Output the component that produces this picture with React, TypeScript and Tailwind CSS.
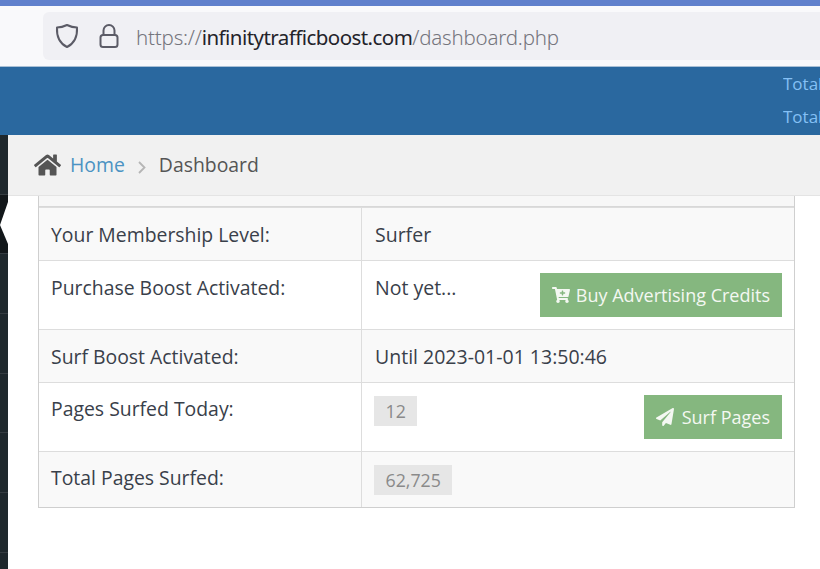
import React from "react";
import { FaHome, FaCartPlus, FaPaperPlane } from "react-icons/fa";

function Row({ label, value, badge, button, h, striped, icon, top }: { label: string; value?: string; badge?: string; button?: string; h: string; striped?: boolean; icon?: React.ReactNode; top?: boolean }) {
  return (
    <div className={`flex border-t border-[#dddddd] ${h} ${striped ? "bg-[#f9f9f9]" : "bg-white"}`}>
      <div className={`w-[323px] shrink-0 border-r border-[#dddddd] pl-3 leading-[26px] ${top ? "pt-[14px]" : "pt-[13px]"}`}>{label}</div>
      <div className={`flex flex-1 items-start justify-between pl-[13px] pr-3 leading-[26px] ${top ? "pt-[14px]" : "pt-[13px]"}`}>
        {value && <span className="text-[19.5px]">{value}</span>}
        {badge && <span className="-ml-px bg-[#e6e6e6] px-[11.5px] text-[17.8px] leading-[30px] text-[#8a8a8a]">{badge}</span>}
        {button && (
          <span className={`flex h-[44px] items-center bg-[#85b77f] px-3 text-[18px] text-[#f4f8f2] ${top ? "-mt-[2px]" : "-mt-px"}`}>
            {icon}
            {button}
          </span>
        )}
      </div>
    </div>
  );
}

const sideRows = ["h-[60px]", "h-[59px]", "h-[60px]", "h-[60px]", "h-[59px]", "h-[60px]", "h-[60px]"];

export default function App() {
  return (
    <div className="flex h-[569px] w-[820px] flex-col overflow-hidden bg-white font-['Open_Sans',sans-serif] text-[19.4px] text-[#39404a]">
      <div className="h-[6px] bg-[#6080cc]" />
      <div className="flex h-[60px] items-center bg-[#f9f9fb] pl-[43px]">
        <div className="flex h-[48px] flex-1 items-center rounded-l-[6px] bg-[#f0f0f4] pl-[12px]">
          <svg width="24" height="26" viewBox="0 0 24 26" fill="none" stroke="#5b5b66" strokeWidth="2" strokeLinejoin="round">
            <path d="M12 2 C15 3.5 18.5 4.5 22 4.5 C22.5 13 19 20.5 12 24 C5 20.5 1.5 13 2 4.5 C5.5 4.5 9 3.5 12 2 Z" />
          </svg>
          <svg className="ml-[20px]" width="20" height="26" viewBox="0 0 20 26" fill="none" stroke="#5b5b66" strokeWidth="2">
            <rect x="1.5" y="12" width="17" height="12" rx="2.5" />
            <path d="M4.5 12 V7.5 a5.5 5.5 0 0 1 11 0 V12" />
          </svg>
          <div className="ml-[17px] pt-[3px] font-['Noto_Sans',sans-serif] text-[20.5px] font-light tracking-[-0.2px] text-[#75757d]">
            https://<span className="font-normal tracking-[-0.55px] text-[#24232a]">infinitytrafficboost.com</span><span className="tracking-[-0.2px]">/dashboard.php</span>
          </div>
        </div>
      </div>
      <div className="flex h-[69px] flex-col items-end justify-center gap-[11px] overflow-hidden border-t border-[#a9c0d6] bg-[#2a689f] pb-[2px] text-[17px] leading-[22px] text-[#84c0f5]">
        <div className="w-[37px] overflow-hidden">Total</div>
        <div className="w-[37px] overflow-hidden">Total</div>
      </div>
      <div className="flex flex-1">
        <div className="flex w-[8px] shrink-0 flex-col bg-[#1f282d]">
          {sideRows.map((h, i) => (
            <div key={i} className={`${h} relative border-b border-[#363d42] ${i === 1 ? "bg-[#12171a]" : ""}`}>
              {i === 1 && (
                <svg className="absolute left-0 top-[6px]" width="8" height="44" viewBox="0 0 8 44">
                  <path d="M8 1 L0 24 L8 43 Z" fill="#ffffff" />
                </svg>
              )}
            </div>
          ))}
        </div>
        <div className="flex min-w-0 flex-1 flex-col">
          <div className="flex h-[61px] items-center border-b border-[#e4e4e4] bg-[#f1f1f1] pl-[26px]">
            <FaHome className="h-[26px] w-[27px] text-[#555555]" />
            <span className="ml-[9px] text-[#4b93c3]">Home</span>
            <svg className="mx-[13px] mt-[4px]" width="8" height="14" viewBox="0 0 8 14" fill="none" stroke="#b5b5b5" strokeWidth="1.8">
              <path d="M1 2 L6.5 7.5 L1 13" />
            </svg>
            <span className="text-[#555555]">Dashboard</span>
          </div>
          <div className="ml-[30px] mr-[25px] border-x border-b border-[#cfcfcf]">
            <div className="h-[10px] bg-[#f7f7f7]" />
            <div className="border-t border-[#d8d8d8]">
              <Row label="Your Membership Level:" value="Surfer" h="h-[53px]" striped top />
              <Row label="Purchase Boost Activated:" value="Not yet..." h="h-[69px]" button="Buy Advertising Credits" icon={<FaCartPlus className="mr-[6px] h-[18px] w-[18px]" />} top />
              <Row label="Surf Boost Activated:" value="Until 2023-01-01 13:50:46" h="h-[53px]" striped top />
              <Row label="Pages Surfed Today:" badge="12" h="h-[69px]" button="Surf Pages" icon={<FaPaperPlane className="mr-[8px] h-[18px] w-[18px]" />} />
              <Row label="Total Pages Surfed:" badge="62,725" h="h-[56px]" striped />
            </div>
          </div>
        </div>
      </div>
    </div>
  );
}
